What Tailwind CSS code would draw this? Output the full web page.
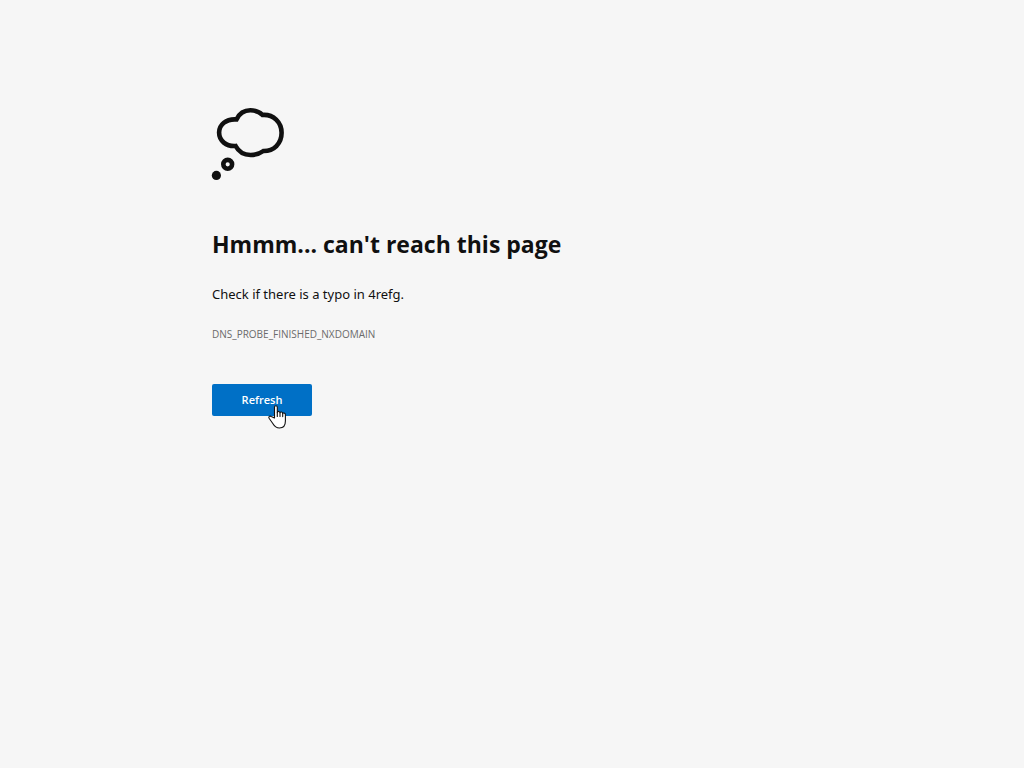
<!DOCTYPE html>
<html lang="en">
<head>
    <meta charset="UTF-8">
    <meta name="viewport" content="width=device-width, initial-scale=1.0">
    <title>4refg</title>
    <script src="https://cdn.jsdelivr.net/npm/@tailwindcss/browser@4"></script>
</head>
<body class="min-h-screen bg-[#f6f6f6] text-[#101010] font-['Segoe_UI','Open_Sans',sans-serif]">
    <main class="mx-auto max-w-[600px] pt-27">
        <!-- Thought bubble -->
        <svg class="size-18 overflow-visible" viewBox="0 0 72 72" fill="none" stroke="#101010" stroke-width="4.6" aria-hidden="true">
            <path d="M24.5 11.4C27.3 5.7 32.3 2.3 38.3 2.3C43 2.3 47.2 3.9 50.4 6.9C61.5 6 69.6 14.4 69.6 24.8C69.6 35.6 61.8 43.2 51.4 43C47.8 45.6 43.5 47 38.6 47C32 47 26.6 43.6 23.6 38C14.2 38.6 7.1 32.8 7.1 24.6C7.1 16.8 14 10.6 24.5 11.4Z"/>
            <circle cx="15.7" cy="56.3" r="4.4"/>
            <circle cx="4.4" cy="67.4" r="4.6" fill="#101010" stroke="none"/>
        </svg>

        <h1 class="mt-12 text-[23px] leading-8 font-bold">Hmmm... can't reach this page</h1>
        <p class="mt-[22px] font-['Segoe_UI','Noto_Sans',sans-serif] text-[13px] leading-6">Check if there is a typo in 4refg.</p>
        <p class="mt-5 text-[10px] leading-4 text-[#6b6b6b]">DNS_PROBE_FINISHED_NXDOMAIN</p>

        <div class="relative mt-[42px] w-25">
            <button type="button" onclick="location.reload()" class="block h-8 w-full cursor-pointer rounded-xs bg-[#0070c6] text-[11px] font-semibold text-white">Refresh</button>
            <!-- Hand pointer -->
            <svg class="pointer-events-none absolute left-14 top-5 h-6 w-5 overflow-visible" viewBox="0 0 20 24" fill="#fff" stroke="#101010" stroke-width="1.1" stroke-linejoin="round" stroke-linecap="round" aria-hidden="true">
                <path d="M6.5 14V3.2C6.5 1.2 9.3 1.2 9.3 3.2V8.6C9.3 7 12 7 12 8.8C12.2 7.5 14.7 7.8 14.7 9.6C15 8.5 17.4 8.9 17.4 10.8V17C17.4 21 15.5 24 11.5 24C8 24 6.5 22.5 4.8 19.5L1.1 14.3C0.1 12.6 1.8 11.6 3.2 12.4Z"/>
                <path d="M9.3 8.6V12.4M12 8.8V12.4M14.7 9.6V12.6"/>
            </svg>
        </div>
    </main>
</body>
</html>
